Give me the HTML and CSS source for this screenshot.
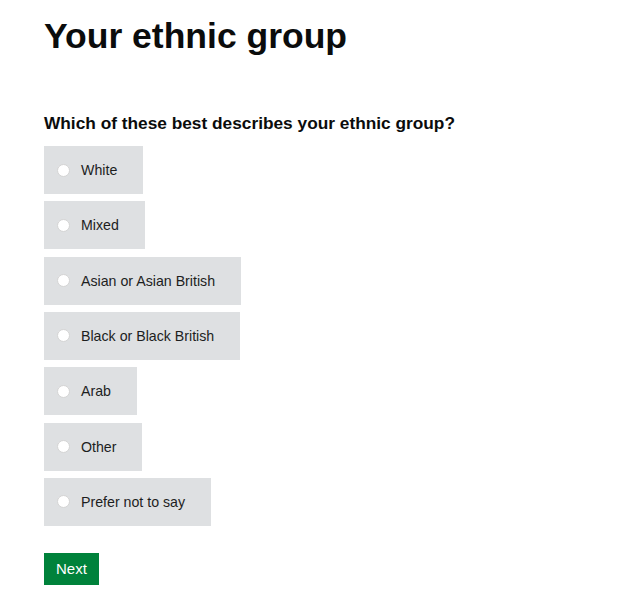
FILE: index.html
```html
<!DOCTYPE html>
<html lang="en">
<head>
  <meta charset="UTF-8" />
  <title>Your ethnic group</title>
  <meta name="viewport" content="width=device-width, initial-scale=1.0" />
  <link rel="stylesheet" href="styles.css">
</head>
<body>
  <main class="page">
    <h1>Your ethnic group</h1>
    <form id="ethnic-form">
      <fieldset>
        <legend>Which of these best describes your ethnic group?</legend>
        <div class="options">
          <label class="option"><input type="radio" name="ethnic" value="white" /> White</label>
          <label class="option"><input type="radio" name="ethnic" value="mixed" /> Mixed</label>
          <label class="option"><input type="radio" name="ethnic" value="asian" /> Asian or Asian British</label>
          <label class="option"><input type="radio" name="ethnic" value="black" /> Black or Black British</label>
          <label class="option"><input type="radio" name="ethnic" value="arab" /> Arab</label>
          <label class="option"><input type="radio" name="ethnic" value="other" /> Other</label>
          <label class="option"><input type="radio" name="ethnic" value="none" /> Prefer not to say</label>
        </div>
      </fieldset>
      <button type="submit">Next</button>
    </form>
  </main>
</body>
</html>
```

FILE: styles.css
```css
:root {
  --text: #0b0c0c;
  --panel: #dee0e2;
  --green: #00823b;
  --dark-green: #005a29;
}

body {
  font-family: "Liberation Sans", Arial, sans-serif;
  background: #fff;
  color: var(--text);
  margin: 0;
}

.page {
  padding: 16px 44px 0;
}

h1 {
  font-size: 35.5px;
  line-height: 40px;
  font-weight: bold;
  margin: 0 0 55px;
}

fieldset {
  border: none;
  margin: 0;
  padding: 0;
}

legend {
  font-size: 17.3px;
  line-height: 24px;
  font-weight: bold;
  padding: 0;
  margin-bottom: 11px;
}

.options {
  display: flex;
  flex-direction: column;
  align-items: flex-start;
  gap: 7.33px;
}

.option {
  display: flex;
  align-items: center;
  gap: 11.5px;
  height: 48px;
  padding: 0 26px 0 12.5px;
  box-sizing: border-box;
  background: var(--panel);
  font-size: 14.2px;
  color: #1d1e1e;
  cursor: pointer;
}

.option input {
  appearance: none;
  width: 13px;
  height: 13px;
  margin: 0;
  border-radius: 50%;
  border: 1px solid #d4d4d4;
  background: #fff;
}

.option input:checked {
  background: radial-gradient(circle, var(--text) 35%, #fff 40%);
}

button {
  margin-top: 27px;
  background: var(--green);
  color: #fff;
  font-family: inherit;
  font-size: 15px;
  line-height: 19px;
  padding: 6px 12px 7px;
  border: none;
  box-shadow: 0 1px 0 var(--dark-green);
  cursor: pointer;
}

button:hover {
  background: #00692f;
}
```
